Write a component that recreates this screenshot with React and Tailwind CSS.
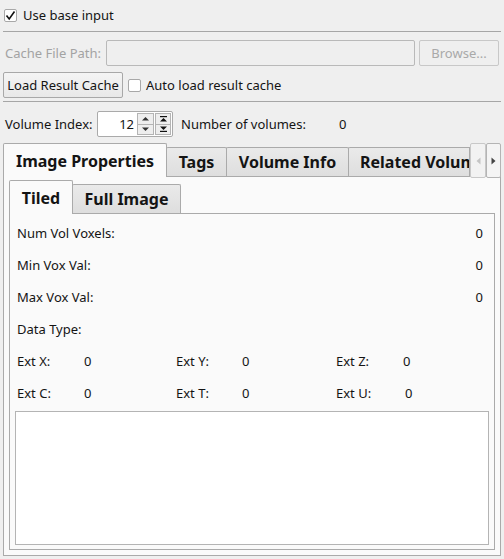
import React from "react";

function CheckBox({ checked }) {
  return (
    <span className="flex h-[13px] w-[13px] shrink-0 items-center justify-center rounded-[2px] border border-[#a8a8a8] bg-white">
      {checked && (
        <svg width="11" height="11" viewBox="0 0 11 11">
          <path d="M1.5 5.5 L4.2 9 L9.5 1.5" fill="none" stroke="#111" strokeWidth="1.6" />
        </svg>
      )}
    </span>
  );
}

function Tri({ dir, bar, color = "#333" }) {
  const up = dir === "up";
  return (
    <svg width="9" height="7" viewBox="0 0 9 7">
      {up ? (
        <>
          <path d={bar ? "M1 6.5 L4.5 3 L8 6.5 Z" : "M1 5.5 L4.5 2 L8 5.5 Z"} fill={color} />
          {bar && <rect x="1" y="1" width="7" height="1.2" fill={color} />}
        </>
      ) : (
        <>
          <path d={bar ? "M1 0.5 L4.5 4 L8 0.5 Z" : "M1 1.5 L4.5 5 L8 1.5 Z"} fill={color} />
          {bar && <rect x="1" y="4.8" width="7" height="1.2" fill={color} />}
        </>
      )}
    </svg>
  );
}

function SpinBox() {
  return (
    <div className="flex h-[26px] w-[76px] items-stretch rounded-[2px] border border-[#aaaaaa] bg-white">
      <div className="flex flex-1 items-center justify-end pr-[3px]">12</div>
      <div className="my-[1px] flex w-[17px] flex-col border border-[#b4b4b4] bg-[#eeeeee]">
        <div className="flex flex-1 items-center justify-center border-b border-[#b4b4b4]"><Tri dir="up" /></div>
        <div className="flex flex-1 items-center justify-center"><Tri dir="down" /></div>
      </div>
      <div className="my-[1px] ml-[1px] mr-[1px] flex w-[16px] flex-col border border-[#b4b4b4] bg-[#eeeeee]">
        <div className="flex flex-1 items-center justify-center border-b border-[#b4b4b4]"><Tri dir="up" bar color="#111" /></div>
        <div className="flex flex-1 items-center justify-center"><Tri dir="down" bar color="#111" /></div>
      </div>
    </div>
  );
}

function Tab({ label, active, w, first }) {
  return (
    <div
      className={
        "relative flex shrink-0 items-center justify-center rounded-t-[2px] border border-[#aaaaaa] font-bold " +
        (active
          ? "z-10 -mb-px h-[34px] border-b-0 bg-[#fafafa]"
          : "h-[29px] border-b-0 bg-gradient-to-b from-[#eaeaea] to-[#dedede]") +
        (first ? "" : " -ml-px")
      }
      style={{ width: w }}
    >
      {label}
    </div>
  );
}

export default function App() {
  const ROWS = ["Num Vol Voxels:", "Min Vox Val:", "Max Vox Val:", "Data Type:"];

  return (
    <div className="h-[559px] w-[504px] overflow-hidden bg-[#efefef] text-[13px] leading-none text-[#141414] font-['Noto_Sans',sans-serif]">
      <div className="flex h-[29px] items-center gap-[6px] pl-[4px] pt-[1px]">
        <CheckBox checked />
        <span>Use base input</span>
      </div>
      <div className="mx-[3px] mt-[2px] h-px bg-[#a6a6a6]" />

      <div className="mt-[8px] flex h-[26px] items-center pl-[5px] pr-[5px]">
        <span className="w-[100px] text-[#a3a3a3]">Cache File Path:</span>
        <div className="ml-[1px] h-[26px] w-[309px] rounded-[2px] border border-[#b9b9b9] bg-[#efefef]" />
        <div className="ml-[4px] flex h-[26px] w-[80px] items-center justify-center rounded-[2px] border border-[#c8c8c8] bg-[#efefef] text-[#a9a9a9]">
          Browse...
        </div>
      </div>

      <div className="mt-[6px] flex h-[26px] items-center pl-[3px]">
        <div className="flex h-[26px] w-[120px] items-center justify-center rounded-[2px] border border-[#a8a8a8] bg-gradient-to-b from-[#f4f4f4] to-[#e8e8e8]">
          Load Result Cache
        </div>
        <span className="ml-[5px]"><CheckBox /></span>
        <span className="ml-[5px]">Auto load result cache</span>
      </div>
      <div className="mx-[3px] mt-[3px] h-px bg-[#a6a6a6]" />

      <div className="mt-[9px] flex h-[26px] items-center pl-[5px]">
        <span className="w-[92px]">Volume Index:</span>
        <SpinBox />
        <span className="ml-[8px] w-[158px]">Number of volumes:</span>
        <span>0</span>
      </div>

      <div className="mx-[3px] mt-[7px]">
        <div className="flex h-[32px] items-end text-[16px]">
          <Tab label="Image Properties" active w={164} first />
          <Tab label="Tags" w={61} />
          <Tab label="Volume Info" w={123} />
          <div className="-ml-px h-[29px] w-[124px] overflow-hidden rounded-tl-[2px] border border-b-0 border-[#aaaaaa] bg-gradient-to-b from-[#eaeaea] to-[#dedede] font-bold">
            <span className="flex h-full items-center whitespace-nowrap pl-[11px]">Related Volumes</span>
          </div>
          <div className="mb-[-2px] flex h-[35px] self-end">
            <div className="flex w-[16px] items-center justify-center rounded-[2px] border border-[#c8c8c8] bg-[#f2f2f2]">
              <svg width="5" height="8" viewBox="0 0 5 8"><path d="M4.5 0.5 L0.5 4 L4.5 7.5 Z" fill="#c4c4c4" /></svg>
            </div>
            <div className="flex w-[15px] items-center justify-center rounded-[2px] border border-[#b4b4b4] bg-[#f4f4f4]">
              <svg width="5" height="8" viewBox="0 0 5 8"><path d="M0.5 0.5 L4.5 4 L0.5 7.5 Z" fill="#444" /></svg>
            </div>
          </div>
        </div>

        <div className="h-[380px] border border-[#aaaaaa] bg-[#fafafa] p-[5px]">
          <div className="flex h-[31px] items-end text-[16px]">
            <Tab label="Tiled" active w={64} first />
            <Tab label="Full Image" w={109} />
          </div>
          <div className="flex h-[337px] flex-col border border-[#aaaaaa] bg-[#fafafa] pl-[5px] pr-[5px] pt-[3px]">
            {ROWS.map((r, i) => (
              <div key={r} className="flex h-[32px] items-center pl-[2px] pr-[6px]">
                <span className="flex-1">{r}</span>
                <span>{i < 3 ? "0" : ""}</span>
              </div>
            ))}
            {[
              [["Ext X:", 67], ["Ext Y:", 66], ["Ext Z:", 67]],
              [["Ext C:", 67], ["Ext T:", 66], ["Ext U:", 69]],
            ].map((row, i) => (
              <div key={i} className="grid h-[32px] grid-cols-[159px_160px_1fr] items-center pl-[2px]">
                {row.map(([l, o]) => (
                  <div key={l} className="flex items-center">
                    <span style={{ width: o }}>{l}</span>
                    <span>0</span>
                  </div>
                ))}
              </div>
            ))}
            <div className="mt-[2px] h-[134px] border border-[#b4b4b4] bg-white" />
          </div>
        </div>
      </div>
    </div>
  );
}
